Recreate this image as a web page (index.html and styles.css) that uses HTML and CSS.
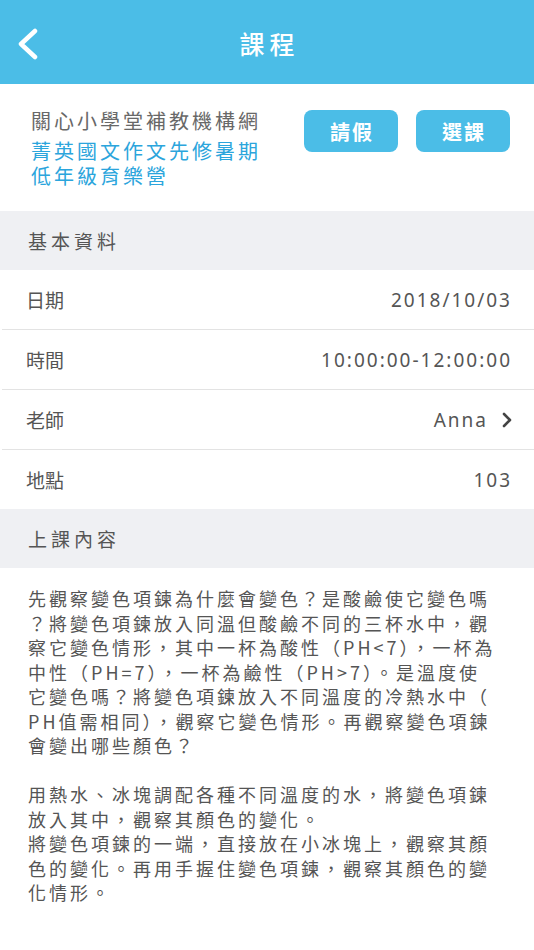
FILE: index.html
```html
<!DOCTYPE html>
<html lang="zh-TW">
<head>
    <meta charset="UTF-8">
    <meta name="viewport" content="width=device-width, initial-scale=1.0">
    <title>課程</title>
    <link rel="stylesheet" href="styles.css">
</head>
<body>
    <div id="header">
        <div class="back">
            <svg width="22" height="32" viewBox="0 0 22 32">
                <polyline points="19,3 5,16 19,29" fill="none" stroke="#ffffff" stroke-width="4.5" stroke-linecap="round" stroke-linejoin="round"/>
            </svg>
        </div>
        <h1 class="title">課程</h1>
        <div></div>
    </div>

    <div id="info">
        <div class="names">
            <p class="org">關心小學堂補教機構網</p>
            <p class="course">菁英國文作文先修暑期<br>低年級育樂營</p>
        </div>
        <div class="btns">
            <div class="btn">請假</div>
            <div class="btn">選課</div>
        </div>
    </div>

    <div class="section">基本資料</div>
    <ul id="rows">
        <li><span class="label">日期</span><span class="value">2018/10/03</span></li>
        <li><span class="label">時間</span><span class="value">10:00:00-12:00:00</span></li>
        <li>
            <span class="label">老師</span>
            <span class="value">Anna
                <svg class="arrow" width="10" height="16" viewBox="0 0 10 16">
                    <polyline points="2,2 8,8 2,14" fill="none" stroke="#444444" stroke-width="2.6" stroke-linecap="round" stroke-linejoin="round"/>
                </svg>
            </span>
        </li>
        <li><span class="label">地點</span><span class="value">103</span></li>
    </ul>

    <div class="section">上課內容</div>
    <div id="content">
        <p>先觀察變色項鍊為什麼會變色？是酸鹼使它變色嗎<br>？將變色項鍊放入同溫但酸鹼不同的三杯水中，觀<br>察它變色情形，其中一杯為酸性（PH&lt;7），一杯為<br>中性（PH=7），一杯為鹼性（PH&gt;7）。是溫度使<br>它變色嗎？將變色項鍊放入不同溫度的冷熱水中（<br>PH值需相同），觀察它變色情形。再觀察變色項鍊<br>會變出哪些顏色？</p>
        <p>用熱水、冰塊調配各種不同溫度的水，將變色項鍊<br>放入其中，觀察其顏色的變化。<br>將變色項鍊的一端，直接放在小冰塊上，觀察其顏<br>色的變化。再用手握住變色項鍊，觀察其顏色的變<br>化情形。</p>
    </div>
</body>
</html>
```

FILE: styles.css
```css
*{
    margin: 0;
    padding: 0;
    list-style: none;
    box-sizing: border-box;
}
body{
    font-family: "Noto Sans", "Noto Sans CJK TC", sans-serif;
    background-color: #ffffff;
    color: #555555;
}
#header{
    display: grid;
    grid-template-columns: 1fr auto 1fr;
    align-items: center;
    height: 84px;
    padding-top: 4px;
    background-color: #4bbde7;
}
#header .back{
    display: flex;
    padding-left: 16px;
}
#header .title{
    font-size: 25px;
    font-weight: 500;
    letter-spacing: 5px;
    padding-left: 5px;
    color: #ffffff;
    line-height: 30px;
}
#info{
    display: flex;
    align-items: flex-start;
    padding: 26px 24px 22px 31px;
}
#info .names{
    flex: 1;
    font-size: 20px;
}
#info .org{
    line-height: 24px;
    letter-spacing: 3px;
    color: #686868;
    margin-bottom: 6px;
    white-space: nowrap;
}
#info .course{
    line-height: 24.5px;
    letter-spacing: 3px;
    color: #2ba5dc;
    white-space: nowrap;
}
#info .btns{
    display: flex;
    gap: 18px;
}
#info .btn{
    width: 94px;
    height: 42px;
    border-radius: 8px;
    background-color: #4bbde7;
    color: #ffffff;
    font-size: 20px;
    font-weight: 700;
    letter-spacing: 2px;
    padding-left: 2px;
    display: flex;
    align-items: center;
    justify-content: center;
}
.section{
    display: flex;
    align-items: center;
    height: 59px;
    padding-left: 28px;
    background-color: #eff0f3;
    font-size: 19px;
    letter-spacing: 4px;
    color: #555555;
}
#rows>li{
    display: flex;
    align-items: center;
    justify-content: space-between;
    height: 60px;
    margin-left: 2px;
    padding: 0 22px 0 24px;
    border-bottom: 1px solid #e3e3e3;
    font-size: 19px;
}
#rows>li:last-child{
    height: 59px;
    border-bottom: none;
}
#rows .label{
    color: #555555;
}
#rows .value{
    display: flex;
    align-items: center;
    letter-spacing: 2px;
    color: #555555;
}
#rows .arrow{
    margin-left: 14px;
}
#content{
    padding: 18px 8px 40px 28px;
    font-family: "Noto Sans CJK TC", sans-serif;
    font-size: 18px;
    line-height: 24.5px;
    letter-spacing: 3px;
    color: #555555;
    white-space: nowrap;
}
#content p{
    margin-bottom: 24.5px;
}
```
